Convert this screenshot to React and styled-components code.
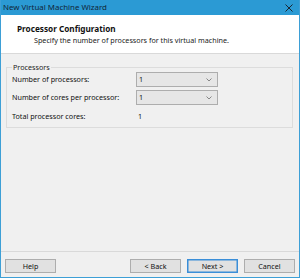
import React from "react"
import styled, { createGlobalStyle } from "styled-components"

const GlobalStyles = createGlobalStyle`
  html, body {
    margin: 0;
    padding: 0;
    background: #ffffff;
  }
  * {
    box-sizing: border-box;
  }
`

const Window = styled.div`
  width: 300px;
  height: 278px;
  display: flex;
  flex-direction: column;
  border: 1px solid #3d9fd6;
  border-top: none;
  background: #f0f0f0;
  font-family: "Noto Sans", "Open Sans", sans-serif;
  font-size: 7.2px;
  color: #111;
  overflow: hidden;
`

const TitleBar = styled.div`
  height: 15px;
  margin: 0 -1px;
  padding: 0 7px 0 3px;
  display: flex;
  align-items: center;
  justify-content: space-between;
  background: #2b9ad4;
  color: #10263a;
  font-size: 7.9px;
  line-height: 15px;
`

const Header = styled.div`
  height: 39px;
  display: flex;
  flex-direction: column;
  padding: 8px 0 0 16px;
  background: #ffffff;
  border-bottom: 1px solid #d9d9d9;
`

const Heading = styled.div`
  font-weight: bold;
  line-height: 11px;
  font-size: 8.2px;
`

const SubHeading = styled.div`
  margin-left: 17px;
  margin-top: 1px;
  line-height: 11px;
  color: #222;
`

const Body = styled.div`
  flex: 1;
  padding: 8px 6px 0 5px;
`

const GroupBox = styled.fieldset`
  margin: 0;
  padding: 0 5px 3px 5px;
  border: 1px solid #dcdcdc;
  min-width: 0;

  legend {
    padding: 0 1px;
    line-height: 10px;
    color: #222;
  }
`

const FieldGrid = styled.div`
  display: grid;
  grid-template-columns: 124px 82px;
  grid-template-rows: 15px 15px 16px;
  row-gap: 3px;
  align-items: center;
`

const Label = styled.div`
  line-height: 11px;
`

const SelectBox = styled.div`
  height: 15px;
  display: flex;
  align-items: center;
  justify-content: space-between;
  padding: 0 5px 0 2px;
  background: #e6e6e6;
  border: 1px solid #adadad;
  line-height: 11px;
`

const Value = styled.div`
  padding-left: 2px;
  line-height: 11px;
`

const Footer = styled.div`
  display: flex;
  align-items: center;
  gap: 6px;
  padding: 7px 4px 4px;
  border-top: 1px solid #d9d9d9;
`

const Spacer = styled.div`
  flex: 1;
`

const Button = styled.div`
  width: 51px;
  height: 14px;
  display: flex;
  align-items: center;
  justify-content: center;
  background: #e1e1e1;
  border: 1px solid ${(p) => (p.$primary ? "#3a8ed8" : "#adadad")};
  box-shadow: ${(p) => (p.$primary ? "inset 0 0 0 0.5px #3a8ed8" : "none")};
  line-height: 11px;
`

const Chevron = () => (
  <svg width="6" height="4" viewBox="0 0 6 4">
    <polyline points="0.5,0.5 3,3 5.5,0.5" fill="none" stroke="#7a7a7a" strokeWidth="0.9" />
  </svg>
)

const CloseIcon = () => (
  <svg width="8" height="8" viewBox="0 0 8 8">
    <path d="M0.5 0.5 L7.5 7.5 M7.5 0.5 L0.5 7.5" stroke="#1a2733" strokeWidth="1" />
  </svg>
)

const App = () => {
  return (
    <>
      <GlobalStyles />
      <Window>
        <TitleBar>
          <span>New Virtual Machine Wizard</span>
          <CloseIcon />
        </TitleBar>
        <Header>
          <Heading>Processor Configuration</Heading>
          <SubHeading>Specify the number of processors for this virtual machine.</SubHeading>
        </Header>
        <Body>
          <GroupBox>
            <legend>Processors</legend>
            <FieldGrid>
              <Label>Number of processors:</Label>
              <SelectBox>
                <span>1</span>
                <Chevron />
              </SelectBox>
              <Label>Number of cores per processor:</Label>
              <SelectBox>
                <span>1</span>
                <Chevron />
              </SelectBox>
              <Label>Total processor cores:</Label>
              <Value>1</Value>
            </FieldGrid>
          </GroupBox>
        </Body>
        <Footer>
          <Button>Help</Button>
          <Spacer />
          <Button>&lt; Back</Button>
          <Button $primary>Next &gt;</Button>
          <Button>Cancel</Button>
        </Footer>
      </Window>
    </>
  )
}

export default App
